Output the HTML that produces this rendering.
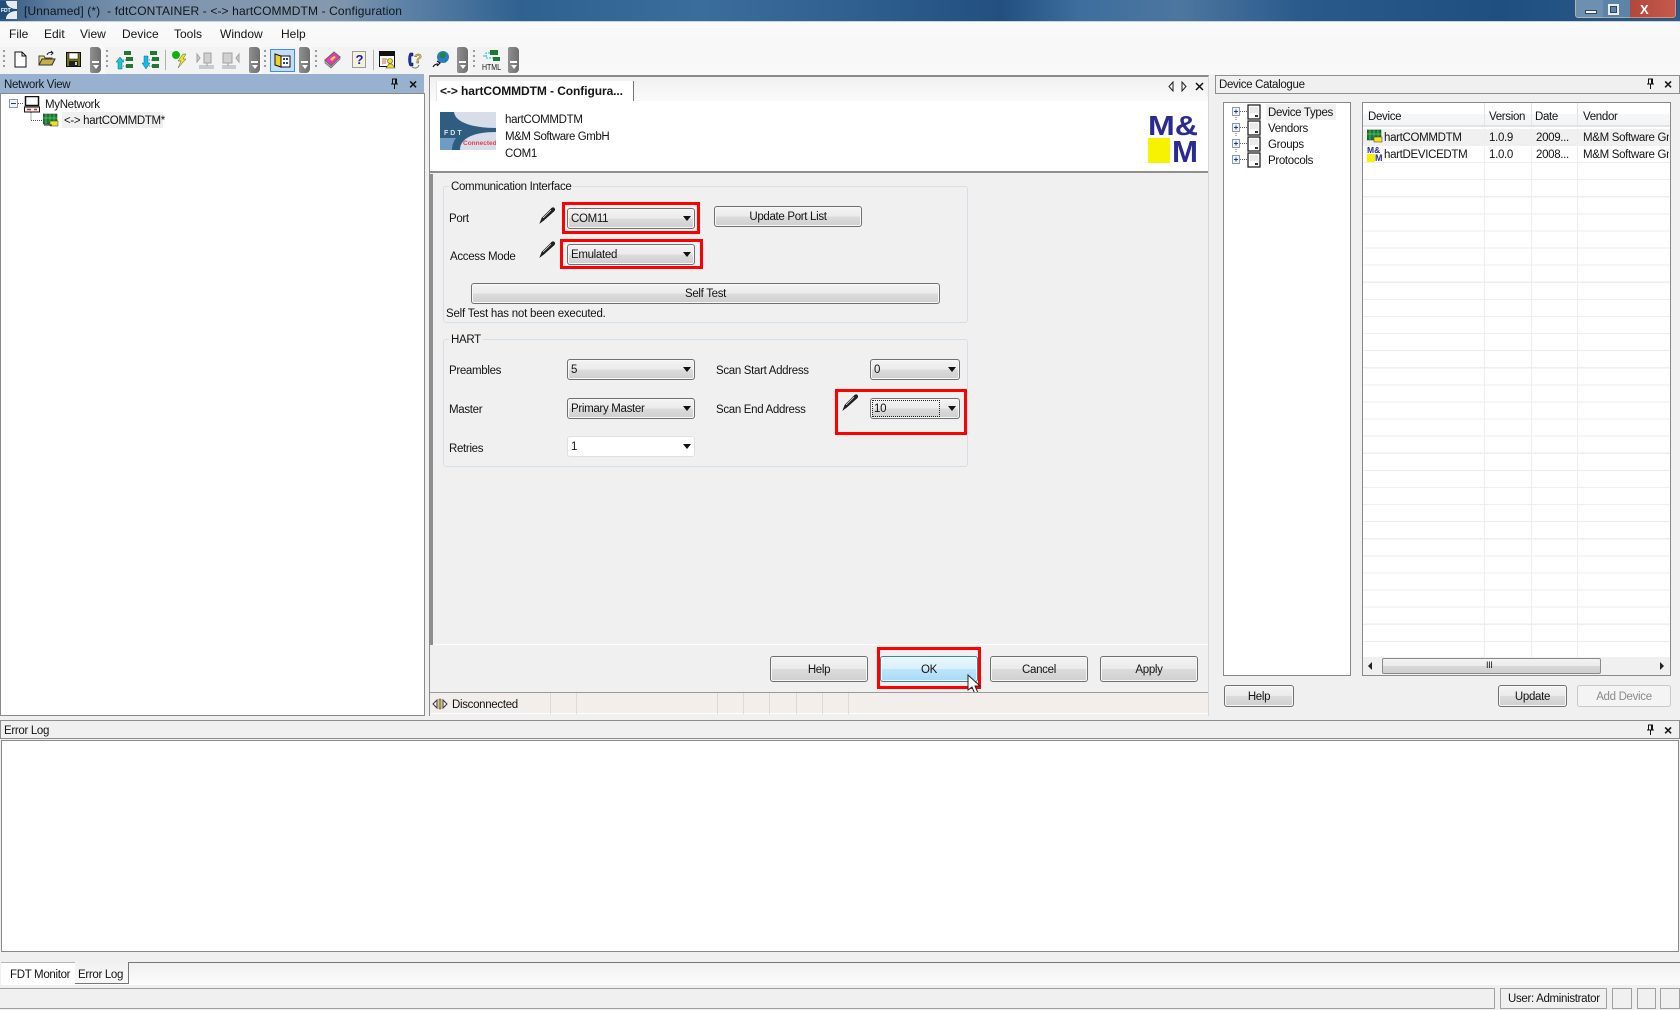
<!DOCTYPE html>
<html><head><meta charset="utf-8"><title>fdtCONTAINER</title>
<style>
html,body{margin:0;padding:0;width:1680px;height:1010px;overflow:hidden;background:#f0f0f0;font:11.5px "Liberation Sans",sans-serif;letter-spacing:-.32px;color:#141414}
div,span,svg{position:absolute;box-sizing:border-box}
svg{letter-spacing:0}
.t{white-space:nowrap;height:16px;line-height:18px}
.m{font-size:12px;letter-spacing:0;line-height:16px}
.b{border:1px solid #707070;border-radius:3px;background:linear-gradient(#f3f3f3,#ebebeb 50%,#dcdcdc 50%,#cfcfcf);box-shadow:inset 0 0 0 1px #f8f8f8;text-align:center;white-space:nowrap}
.c{border:1px solid #707070;border-radius:3px;background:linear-gradient(#f3f3f3,#ebebeb 50%,#dcdcdc 50%,#cfcfcf);box-shadow:inset 0 0 0 1px #f8f8f8;padding-left:3px;line-height:21px;white-space:nowrap}
.c i{position:absolute;right:3px;top:7px;border:4px solid transparent;border-top:5px solid #111;border-bottom:0}
.r{border:3px solid #f00}
.g{border:1px solid #d5dfe5;border-radius:3px}
.l{background:#f0f0f0;padding:0 2px}
.ch{width:11px;height:26px;top:47px;background:linear-gradient(90deg,#909090,#6f6f6f);border-radius:2px 4px 4px 2px}
.ch:after{content:"";position:absolute;left:2px;top:14px;width:7px;height:2px;background:#fff}
.ch:before{content:"";position:absolute;left:3px;top:18px;border:3px solid transparent;border-top:4px solid #fff;border-bottom:0}
.grip{width:2px;height:20px;top:50px;background:repeating-linear-gradient(#9a9a9a 0 2px,transparent 2px 5px)}
.x{font:bold 13px "Liberation Sans",sans-serif;letter-spacing:0;color:#111}
.hd{background:#f0f0f0;border:1px solid #8e8e8e;height:19px}
.sep{width:1px;background:#dcd9d6;top:693px;height:21px}
.vl{width:1px;top:128px;height:529px;background:#eeeeee}
</style></head><body>

<!-- title bar -->
<div style="left:0;top:0;width:1680px;height:22px;background:linear-gradient(90deg,#33587f 0,#5c7c9f 50px,#7f96ae 150px,#8598ad 330px,#5f83a8 400px,#2f6190 520px,#3b6d9c 700px,#2f6090 850px,#224f80 1000px,#3d6e9e 1080px,#4d769f 1180px,#2a5a8c 1300px,#1f4e80 1500px,#2c5c8c 1680px);border-bottom:1px solid #c8d4de"></div>
<svg style="left:0;top:1px;width:17px;height:18px" viewBox="0 0 17 18"><rect width="17" height="18" fill="#e6ecf2"/><path d="M0 0h6c0 5 5 8 11 8v2c-6 0-11 3-11 8H0z" fill="#1f4f78"/><text x="1" y="11" font-size="5" font-weight="bold" fill="#fff" font-family="Liberation Sans">FDT</text></svg>
<div class="t m" style="left:24px;top:3px;color:#10161c;letter-spacing:.12px">[Unnamed] (*)&nbsp; - fdtCONTAINER - &lt;-&gt; hartCOMMDTM - Configuration</div>
<div style="left:1574px;top:-2px;width:103px;height:21px;border:1px solid #3e4f60;border-radius:0 0 4px 4px;background:linear-gradient(90deg,#6d8fb0 0 28px,#5e83a8 28px 55px,#b0483c 55px,#c55a4c);box-shadow:inset 0 0 0 1px rgba(255,255,255,.35)"></div>
<div style="left:1585px;top:10px;width:12px;height:4px;background:#f0f3f6;border:1px solid #33475b"></div>
<div style="left:1608px;top:4px;width:11px;height:11px;border:2px solid #e8edf2;outline:1px solid #33475b;outline-offset:-3px"></div>
<div class="x" style="left:1640px;top:2px;font-size:13px;color:#fff">X</div>

<!-- menu and toolbar background -->
<div style="left:0;top:22px;width:1680px;height:53px;background:linear-gradient(#fafafa,#f8f8f8 22px,#f9f9f9)"></div>
<div class="t m" style="left:9px;top:26px">File</div>
<div class="t m" style="left:44px;top:26px">Edit</div>
<div class="t m" style="left:80px;top:26px">View</div>
<div class="t m" style="left:122px;top:26px">Device</div>
<div class="t m" style="left:174px;top:26px">Tools</div>
<div class="t m" style="left:220px;top:26px">Window</div>
<div class="t m" style="left:281px;top:26px">Help</div>

<div style="left:0;top:47px;width:98px;height:27px;background:#f3f3f3"></div>
<div class="grip" style="left:3px"></div>
<svg style="left:14px;top:51px;width:13px;height:17px" viewBox="0 0 13 17"><path d="M1 1h7l4 4v11H1zM8 1v4h4" fill="#fff" stroke="#111"/></svg>
<svg style="left:38px;top:50px;width:18px;height:17px" viewBox="0 0 18 17"><path d="M1 6h5l1 2h7v7H1z" fill="#e8e080" stroke="#444"/><path d="M1 15l3-6h13l-3 6z" fill="#c8b040" stroke="#333"/><path d="M9 5c1-3 4-3 6-2M13 1l2 2-2 2" fill="none" stroke="#222"/></svg>
<svg style="left:66px;top:52px;width:15px;height:15px" viewBox="0 0 15 15"><rect x=".5" y=".5" width="14" height="14" fill="#77720f" stroke="#111"/><rect x="3" y="1" width="9" height="6" fill="#fff" stroke="#111" stroke-width=".5"/><rect x="3" y="9" width="9" height="5" fill="#222"/><rect x="9" y="10" width="2" height="3" fill="#ccc"/></svg>
<div class="ch" style="left:90px"></div>

<div style="left:105px;top:47px;width:150px;height:27px;background:#f3f3f3"></div>
<div class="grip" style="left:106px"></div>
<svg style="left:115px;top:50px;width:18px;height:20px" viewBox="0 0 18 20"><path d="M9 4h5M6 8v8h6M6 10h6" fill="none" stroke="#777" stroke-dasharray="1 1"/><rect x="9" y="1" width="7" height="4" fill="#1e7a30"/><rect x="11" y="7" width="7" height="4" fill="#1e7a30"/><rect x="11" y="14" width="7" height="4" fill="#1e7a30"/><path d="M5 7l4 5H7v7H3v-7H1z" fill="#19c6d6" stroke="#0a6a7a" stroke-width=".5"/></svg>
<svg style="left:141px;top:50px;width:18px;height:20px" viewBox="0 0 18 20"><path d="M9 4h5M6 8v8h6M6 10h6" fill="none" stroke="#777" stroke-dasharray="1 1"/><rect x="9" y="1" width="7" height="4" fill="#1e7a30"/><rect x="11" y="7" width="7" height="4" fill="#1e7a30"/><rect x="11" y="14" width="7" height="4" fill="#1e7a30"/><path d="M3 6h4v7h2l-4 6-4-6h2z" fill="#19b8e6" stroke="#0a6a8a" stroke-width=".5"/></svg>
<div style="left:165px;top:50px;width:1px;height:20px;background:#b0b0b0"></div>
<svg style="left:171px;top:50px;width:17px;height:20px" viewBox="0 0 17 20"><circle cx="5" cy="5" r="4" fill="#0fb30f"/><path d="M12 4L7 11h3l-3 7 8-9h-3l3-5z" fill="#f2e020" stroke="#555" stroke-width=".5"/></svg>
<svg style="left:196px;top:50px;width:18px;height:20px" viewBox="0 0 18 20"><path d="M1 4l3 4-3 4zM15 3h-7v10h7z" fill="#d0d0d0" stroke="#a0a0a0"/><path d="M11 13v3M3 16h15M3 18h15" stroke="#a0a0a0" fill="none"/></svg>
<svg style="left:222px;top:50px;width:18px;height:20px" viewBox="0 0 18 20"><path d="M17 4l-3 4 3 4zM1 3h9v10H1z" fill="#d0d0d0" stroke="#a0a0a0"/><path d="M6 13v3M0 16h14M0 18h14" stroke="#a0a0a0" fill="none"/></svg>
<div class="ch" style="left:249px"></div>

<div style="left:262px;top:47px;width:38px;height:27px;background:#f3f3f3"></div>
<div class="grip" style="left:264px"></div>
<div style="left:270px;top:49px;width:25px;height:23px;background:#c4def5;border:1px solid #3a8fe0"></div>
<svg style="left:274px;top:52px;width:17px;height:17px" viewBox="0 0 17 17"><path d="M1 2l6 2v11l-6-2z" fill="#f4d020" stroke="#111"/><path d="M7 4h9v11H7z" fill="#fff" stroke="#111"/><path d="M9 6h2v2H9zM12 6h2v2h-2zM9 10h2v2H9zM12 10h2v2h-2z" fill="#224488"/></svg>
<div class="ch" style="left:299px"></div>

<div style="left:312px;top:47px;width:148px;height:27px;background:#f3f3f3"></div>
<div class="grip" style="left:315px"></div>
<svg style="left:324px;top:51px;width:17px;height:18px" viewBox="0 0 17 18"><path d="M1 9l9-8 6 5-9 9z" fill="#e838b8" stroke="#666"/><path d="M1 9v3l6 5 9-9V6l-9 9z" fill="#b0b0b0" stroke="#666" stroke-width=".7"/><path d="M6 8l4-3 2 1-4 4z" fill="#f2e020"/></svg>
<svg style="left:352px;top:51px;width:14px;height:17px" viewBox="0 0 14 17"><rect x=".5" y=".5" width="13" height="16" fill="#f6f2d8" stroke="#9a9a9a"/><text x="3.500" y="13" font-size="13" font-weight="bold" fill="#1818c8" font-family="Liberation Sans">?</text></svg>
<div style="left:373px;top:50px;width:1px;height:20px;background:#b0b0b0"></div>
<svg style="left:379px;top:51px;width:17px;height:18px" viewBox="0 0 17 18"><rect x=".5" y=".5" width="15" height="15" fill="#fff" stroke="#111"/><rect x="1" y="1" width="14" height="4" fill="#111"/><path d="M3 8h5M3 10h4M3 12h4" stroke="#d06030"/><circle cx="11" cy="10" r="2.500" fill="#f2e020" stroke="#444" stroke-width=".6"/><path d="M7 17l3-4h3l3 4z" fill="#f2e020" stroke="#444" stroke-width=".6"/></svg>
<svg style="left:407px;top:50px;width:17px;height:20px" viewBox="0 0 17 20"><path d="M3 3h3v3H4v7h2v3H3c-2-3-2-10 0-13z" fill="#1830c8" stroke="#111" stroke-width=".5"/><text x="7" y="13" font-size="13" font-weight="bold" fill="#ecd040" font-family="Liberation Sans" stroke="#444" stroke-width=".4">?</text><path d="M5 17c3 2 6 1 7-2" fill="none" stroke="#777"/></svg>
<svg style="left:432px;top:50px;width:18px;height:20px" viewBox="0 0 18 20"><circle cx="11" cy="7" r="6" fill="#2a7ad0"/><path d="M8 3l4-1 2 3-3 4-3-2zM13 9l2 1-2 3z" fill="#1b8a30"/><path d="M1 17c1-2 3-3 5-3M5 11l3 2-3 3" fill="none" stroke="#111" stroke-width="1.200"/></svg>
<div class="ch" style="left:457px"></div>

<div style="left:470px;top:47px;width:40px;height:27px;background:#f3f3f3"></div>
<div class="grip" style="left:473px"></div>
<svg style="left:482px;top:50px;width:19px;height:21px" viewBox="0 0 19 21"><rect x="8" y="0" width="8" height="5" fill="#1e7a30"/><rect x="11" y="7" width="7" height="4" fill="#1e7a30"/><path d="M8 3H4v5h7M1 6h4" fill="none" stroke="#19b8e6" stroke-dasharray="2 1"/><text x="0" y="20" font-size="8" fill="#111" font-family="Liberation Sans" textLength="19" lengthAdjust="spacingAndGlyphs">HTML</text></svg>
<div class="ch" style="left:508px"></div>

<!-- network view -->
<div style="left:0;top:74px;width:424px;height:20px;background:#97b1cf"></div>
<div class="t" style="left:4px;top:76px;color:#101820">Network View</div>
<svg style="left:390px;top:78px;width:9px;height:11px" viewBox="0 0 9 11"><path d="M2.500 1h4v5h-4zM1 6h7M4.500 6v5M5.500 1v5" fill="none" stroke="#111"/></svg>
<div class="x" style="left:409px;top:76px;line-height:16px;font-size:14px">×</div>
<div style="left:0;top:93px;width:425px;height:623px;background:#fff;border:1px solid #8a8a8a"></div>
<svg style="left:9px;top:99px;width:56px;height:32px" viewBox="0 0 56 32"><rect x=".5" y=".5" width="8" height="8" fill="#f2f4f8" stroke="#8a98a8"/><path d="M2 4.500h5" stroke="#1a3a8a"/><path d="M9 4.500h5M22 9.500v12h18" fill="none" stroke="#555" stroke-dasharray="1 1"/></svg>
<svg style="left:24px;top:96px;width:16px;height:17px" viewBox="0 0 16 17"><rect x="1.500" y=".5" width="13" height="9" fill="#fff" stroke="#111" stroke-width="1.500"/><rect x=".5" y="11" width="15" height="5" fill="#eee" stroke="#111"/><path d="M3 13.500h4M10 13.500h3" stroke="#c03030" stroke-width="1.500"/></svg>
<div class="t" style="left:45px;top:96px">MyNetwork</div>
<svg style="left:43px;top:113px;width:16px;height:15px" viewBox="0 0 16 15"><rect y="1" width="14" height="10" fill="#137a2e" stroke="#0a3a18" stroke-width=".5"/><path d="M3 1v10M7 1v10M11 1v10M0 5h14" stroke="#6fc27e" stroke-width=".7"/><rect x="7" y="8" width="8" height="5" fill="#f2e020" stroke="#333" stroke-width=".5"/><path d="M1 12h8" stroke="#222"/></svg>
<div style="left:62px;top:112px;width:101px;height:16px;background:#f0f0f0"></div>
<div class="t" style="left:64px;top:112px">&lt;-&gt; hartCOMMDTM*</div>

<!-- centre panel -->
<div style="left:429px;top:75px;width:780px;height:641px;background:#f0f0f0;border-top:2px solid #8a8a8a;border-left:1px solid #8a8a8a;border-right:1px solid #d8d8d8"></div>
<div style="left:430px;top:77px;width:778px;height:24px;background:linear-gradient(#f0f0f0,#fbfbfb)"></div>
<div style="left:436px;top:81px;width:198px;height:20px;background:#fff;border-right:1px solid #777;border-left:1px solid #e4e4e4"></div>
<div class="t m" style="left:440px;top:83px;font-weight:bold;letter-spacing:-.08px">&lt;-&gt; hartCOMMDTM - Configura...</div>
<svg style="left:1167px;top:81px;width:40px;height:11px" viewBox="0 0 40 11"><path d="M6 1L2 5.500 6 10zM15 1l4 4.500L15 10z" fill="none" stroke="#222"/><path d="M29 2l7 7M36 2l-7 7" stroke="#111" stroke-width="1.500"/></svg>
<div style="left:430px;top:101px;width:778px;height:72px;background:#fff;border-bottom:2px solid #8e8e8e"></div>
<svg style="left:440px;top:112px;width:56px;height:38px" viewBox="0 0 56 38"><rect width="56" height="38" fill="#d7dde9"/><path d="M0 0h14c1 10 18 16 42 16v4C34 20 20 26 20 38H0z" fill="#2f5d80"/><path d="M0 26h16c-3 4-4 8-4 12H0z" fill="#6f9cc4"/><text x="4" y="23" font-size="7" font-weight="bold" fill="#dbe4ea" font-family="Liberation Sans" letter-spacing="2">FDT</text><text x="23" y="33" font-size="6.500" font-weight="bold" fill="#e8414f" font-family="Liberation Sans">Connected</text></svg>
<div class="t" style="left:505px;top:111px">hartCOMMDTM</div>
<div class="t" style="left:505px;top:128px;letter-spacing:-.45px">M&amp;M Software GmbH</div>
<div class="t" style="left:505px;top:145px">COM1</div>
<svg style="left:1148px;top:112px;width:50px;height:51px" viewBox="0 0 50 51"><rect y="26" width="22" height="25" fill="#f6f200"/><text x="0" y="23" font-family="Liberation Sans" font-weight="bold" font-size="28" fill="#2a2a90" textLength="50" lengthAdjust="spacingAndGlyphs">M&amp;</text><text x="24" y="50" font-family="Liberation Sans" font-weight="bold" font-size="31" fill="#2a2a90" textLength="26" lengthAdjust="spacingAndGlyphs">M</text></svg>
<div style="left:430px;top:174px;width:3px;height:471px;background:#8e8e8e"></div>

<!-- communication interface -->
<div class="g" style="left:443px;top:186px;width:525px;height:137px"></div>
<div class="t l" style="left:449px;top:178px">Communication Interface</div>
<div class="t" style="left:449px;top:210px">Port</div>
<svg style="left:539px;top:207px;width:17px;height:17px" viewBox="0 0 17 17"><path d="M15 1c1 1 1 2 0 3L5 13l-2-2L13 1c1-.5 1.500-.5 2 0zM3 11l-2 5 4-3" fill="#222" stroke="#111" stroke-width=".6"/><path d="M12 3l-8 8" stroke="#eee" stroke-width=".7"/></svg>
<div class="r" style="left:562px;top:202px;width:138px;height:32px"></div>
<div class="c" style="left:567px;top:208px;width:128px;height:21px">COM11<i></i></div>
<div class="b" style="left:714px;top:206px;width:148px;height:21px;line-height:21px">Update Port List</div>
<div class="t" style="left:450px;top:248px">Access Mode</div>
<svg style="left:539px;top:241px;width:17px;height:17px" viewBox="0 0 17 17"><path d="M15 1c1 1 1 2 0 3L5 13l-2-2L13 1c1-.5 1.500-.5 2 0zM3 11l-2 5 4-3" fill="#222" stroke="#111" stroke-width=".6"/><path d="M12 3l-8 8" stroke="#eee" stroke-width=".7"/></svg>
<div class="r" style="left:560px;top:239px;width:143px;height:30px"></div>
<div class="c" style="left:567px;top:244px;width:128px;height:21px">Emulated<i></i></div>
<div class="b" style="left:471px;top:283px;width:469px;height:21px;line-height:21px">Self Test</div>
<div class="t" style="left:446px;top:305px;letter-spacing:-.22px">Self Test has not been executed.</div>

<!-- hart -->
<div class="g" style="left:443px;top:339px;width:525px;height:128px"></div>
<div class="t l" style="left:449px;top:331px">HART</div>
<div class="t" style="left:449px;top:362px">Preambles</div>
<div class="c" style="left:567px;top:359px;width:128px;height:21px">5<i></i></div>
<div class="t" style="left:716px;top:362px">Scan Start Address</div>
<div class="c" style="left:870px;top:359px;width:90px;height:21px">0<i></i></div>
<div class="t" style="left:449px;top:401px">Master</div>
<div class="c" style="left:567px;top:398px;width:128px;height:21px">Primary Master<i></i></div>
<div class="t" style="left:716px;top:401px">Scan End Address</div>
<div class="r" style="left:835px;top:389px;width:132px;height:46px"></div>
<svg style="left:842px;top:394px;width:17px;height:17px" viewBox="0 0 17 17"><path d="M15 1c1 1 1 2 0 3L5 13l-2-2L13 1c1-.5 1.500-.5 2 0zM3 11l-2 5 4-3" fill="#222" stroke="#111" stroke-width=".6"/><path d="M12 3l-8 8" stroke="#eee" stroke-width=".7"/></svg>
<div class="c" style="left:870px;top:398px;width:90px;height:21px">10<i></i></div>
<div style="left:872px;top:400px;width:68px;height:17px;border:1px dotted #222"></div>
<div class="t" style="left:449px;top:440px">Retries</div>
<div class="c" style="left:567px;top:436px;width:128px;height:21px;background:#fff;border-color:#e0e0e0;box-shadow:none">1<i></i></div>

<!-- dialog buttons -->
<div style="left:433px;top:644px;width:775px;height:1px;background:#fff"></div>
<div class="b" style="left:770px;top:656px;width:98px;height:26px;line-height:26px">Help</div>
<div class="b" style="left:880px;top:656px;width:98px;height:26px;line-height:26px;border-color:#3c7fb1;background:linear-gradient(#eaf6fd,#d9f0fc 50%,#bee6fd 50%,#a7d9f5)">OK</div>
<div class="b" style="left:990px;top:656px;width:98px;height:26px;line-height:26px">Cancel</div>
<div class="b" style="left:1100px;top:656px;width:98px;height:26px;line-height:26px">Apply</div>
<div class="r" style="left:877px;top:647px;width:104px;height:42px"></div>
<svg style="left:967px;top:674px;width:14px;height:21px" viewBox="0 0 14 21"><path d="M1 1v15l4-3 3 7 3-1-3-7h5z" fill="#fff" stroke="#222"/></svg>
<div style="left:430px;top:692px;width:778px;height:1px;background:#9a9a9a"></div>
<div style="left:431px;top:693px;width:777px;height:21px;background:#f1eeec;border-bottom:1px solid #fff"></div>
<svg style="left:432px;top:697px;width:16px;height:14px" viewBox="0 0 16 14"><path d="M1 7l4-4v8zM15 7l-4-4v8z" fill="#fff" stroke="#333"/><path d="M7 2h2v10H7z" fill="#e8b020" stroke="#333" stroke-width=".5"/></svg>
<div class="t" style="left:452px;top:696px">Disconnected</div>
<div class="sep" style="left:550px"></div><div class="sep" style="left:576px"></div><div class="sep" style="left:717px"></div><div class="sep" style="left:743px"></div><div class="sep" style="left:769px"></div><div class="sep" style="left:796px"></div><div class="sep" style="left:822px"></div><div class="sep" style="left:848px"></div>

<!-- device catalogue -->
<div class="hd" style="left:1215px;top:75px;width:465px"></div>
<div class="t" style="left:1219px;top:76px">Device Catalogue</div>
<svg style="left:1646px;top:78px;width:9px;height:11px" viewBox="0 0 9 11"><path d="M2.500 1h4v5h-4zM1 6h7M4.500 6v5M5.500 1v5" fill="none" stroke="#111"/></svg>
<div class="x" style="left:1664px;top:76px;line-height:16px;font-size:14px">×</div>
<div style="left:1223px;top:102px;width:128px;height:574px;background:#fff;border:1px solid #8a8a8a"></div>
<svg style="left:1230px;top:104px;width:40px;height:64px" viewBox="0 0 40 64"><path d="M6 13v3M6 29v3M6 45v3" stroke="#666" stroke-dasharray="1 1"/><path d="M10 7.500h7M10 23.500h7M10 39.500h7M10 55.500h7" stroke="#666" stroke-dasharray="1 1"/><g fill="#f0f2f6" stroke="#8a98a8"><rect x="2.500" y="3.500" width="7" height="8"/><rect x="2.500" y="19.500" width="7" height="8"/><rect x="2.500" y="35.500" width="7" height="8"/><rect x="2.500" y="51.500" width="7" height="8"/></g><path d="M4 7.500h4M6 5.500v4M4 23.500h4M6 21.500v4M4 39.500h4M6 37.500v4M4 55.500h4M6 53.500v4" stroke="#1a3a8a"/><g fill="#fff" stroke="#111" stroke-width="1.200"><rect x="18" y="1" width="12" height="14"/><rect x="18" y="17" width="12" height="14"/><rect x="18" y="33" width="12" height="14"/><rect x="18" y="49" width="12" height="14"/></g><path d="M20 4h8M20 6h8M20 8h8M20 20h8M20 22h8M20 24h8M20 36h8M20 38h8M20 40h8M20 52h8M20 54h8M20 56h8" stroke="#aaa" stroke-width=".6"/><path d="M25 11h3v2h-3zM25 27h3v2h-3zM25 43h3v2h-3zM25 59h3v2h-3z" fill="#333"/></svg>
<div style="left:1266px;top:104px;width:70px;height:16px;background:#f0f0f0"></div>
<div class="t" style="left:1268px;top:104px">Device Types</div>
<div class="t" style="left:1268px;top:120px">Vendors</div>
<div class="t" style="left:1268px;top:136px">Groups</div>
<div class="t" style="left:1268px;top:152px">Protocols</div>

<div style="left:1362px;top:102px;width:309px;height:574px;background:#fff;border:1px solid #8a8a8a"></div>
<div style="left:1363px;top:103px;width:307px;height:24px;background:linear-gradient(#fff,#fff 50%,#f4f6f8 50%,#f4f5f7);border-bottom:2px solid #e3e4e6"></div>
<div style="left:1484px;top:103px;width:1px;height:24px;background:#e3e4e6"></div>
<div style="left:1531px;top:103px;width:1px;height:24px;background:#e3e4e6"></div>
<div style="left:1577px;top:103px;width:1px;height:24px;background:#e3e4e6"></div>
<div class="t" style="left:1368px;top:108px">Device</div>
<div class="t" style="left:1489px;top:108px">Version</div>
<div class="t" style="left:1535px;top:108px">Date</div>
<div class="t" style="left:1583px;top:108px">Vendor</div>
<div style="left:1363px;top:129px;width:307px;height:17px;background:#f0f0f0"></div>
<div style="left:1363px;top:146px;width:307px;height:511px;background:repeating-linear-gradient(transparent 0 16px,#eeeeee 16px 17.100px)"></div>
<div class="vl" style="left:1484px"></div><div class="vl" style="left:1531px"></div><div class="vl" style="left:1577px"></div>
<svg style="left:1367px;top:129px;width:16px;height:15px" viewBox="0 0 16 15"><rect y="1" width="14" height="10" fill="#137a2e" stroke="#0a3a18" stroke-width=".5"/><path d="M3 1v10M7 1v10M11 1v10M0 5h14" stroke="#6fc27e" stroke-width=".7"/><rect x="7" y="8" width="8" height="5" fill="#f2e020" stroke="#333" stroke-width=".5"/></svg>
<svg style="left:1367px;top:145px;width:16px;height:17px" viewBox="0 0 16 17"><rect x="0" y="9" width="8" height="8" fill="#f6f200"/><text x="0" y="8" font-size="8.500" font-weight="bold" fill="#2a2a90" font-family="Liberation Sans">M&amp;</text><text x="8" y="16" font-size="9" font-weight="bold" fill="#2a2a90" font-family="Liberation Sans">M</text></svg>
<div class="t" style="left:1384px;top:129px">hartCOMMDTM</div>
<div class="t" style="left:1489px;top:129px">1.0.9</div>
<div class="t" style="left:1536px;top:129px">2009...</div>
<div class="t" style="left:1583px;top:129px;width:86px;overflow:hidden">M&amp;M Software GmbH</div>
<div class="t" style="left:1384px;top:146px">hartDEVICEDTM</div>
<div class="t" style="left:1489px;top:146px">1.0.0</div>
<div class="t" style="left:1536px;top:146px">2008...</div>
<div class="t" style="left:1583px;top:146px;width:86px;overflow:hidden">M&amp;M Software GmbH</div>
<div style="left:1363px;top:657px;width:307px;height:18px;background:#f0f0f0"></div>
<div style="left:1382px;top:658px;width:219px;height:16px;border:1px solid #8a8a8a;border-radius:2px;background:linear-gradient(#f3f3f3,#eaeaea 50%,#d8d8d8 50%,#cfcfcf)"></div>
<div class="t" style="left:1486px;top:656px;font-size:9px">III</div>
<div style="left:1368px;top:662px;border:4px solid transparent;border-right:4px solid #222;border-left:0"></div>
<div style="left:1660px;top:662px;border:4px solid transparent;border-left:4px solid #222;border-right:0"></div>
<div class="b" style="left:1224px;top:685px;width:70px;height:22px;line-height:22px">Help</div>
<div class="b" style="left:1498px;top:685px;width:69px;height:22px;line-height:22px">Update</div>
<div class="b" style="left:1577px;top:685px;width:94px;height:22px;line-height:22px;background:#f4f4f4;border-color:#c8c8c8;color:#8a8a8a;box-shadow:none">Add Device</div>

<!-- error log -->
<div class="hd" style="left:0;top:720px;width:1680px"></div>
<div class="t" style="left:4px;top:722px">Error Log</div>
<svg style="left:1646px;top:724px;width:9px;height:11px" viewBox="0 0 9 11"><path d="M2.500 1h4v5h-4zM1 6h7M4.500 6v5M5.500 1v5" fill="none" stroke="#111"/></svg>
<div class="x" style="left:1664px;top:722px;line-height:16px;font-size:14px">×</div>
<div style="left:1px;top:740px;width:1678px;height:212px;background:#fff;border:1px solid #8a8a8a"></div>

<!-- bottom tabs -->
<div style="left:1px;top:962px;width:1679px;height:23px;background:linear-gradient(#f0f0f0,#fcfcfc)"></div>
<div style="left:128px;top:962px;width:1552px;height:1px;background:#777"></div>
<div style="left:1px;top:962px;width:74px;height:23px;background:#fff;border-top:1px solid #b8b8b8"></div>
<div style="left:75px;top:962px;width:54px;height:22px;border-right:1px solid #777;border-bottom:1px solid #777;background:linear-gradient(#f0f0f0,#fafafa)"></div>
<div class="t" style="left:10px;top:966px">FDT Monitor</div>
<div class="t" style="left:78px;top:966px">Error Log</div>

<!-- status bar -->
<div style="left:0;top:988px;width:1495px;height:21px;border:1px solid #a0a0a0;border-left:0"></div>
<div class="t" style="left:1500px;top:988px;width:107px;height:21px;border:1px solid #a0a0a0;padding-left:7px;line-height:21px">User: Administrator</div>
<div style="left:1612px;top:988px;width:20px;height:21px;border:1px solid #a0a0a0"></div>
<div style="left:1637px;top:988px;width:19px;height:21px;border:1px solid #a0a0a0"></div>
<div style="left:1660px;top:988px;width:20px;height:21px;border:1px solid #a0a0a0"></div>
</body></html>
